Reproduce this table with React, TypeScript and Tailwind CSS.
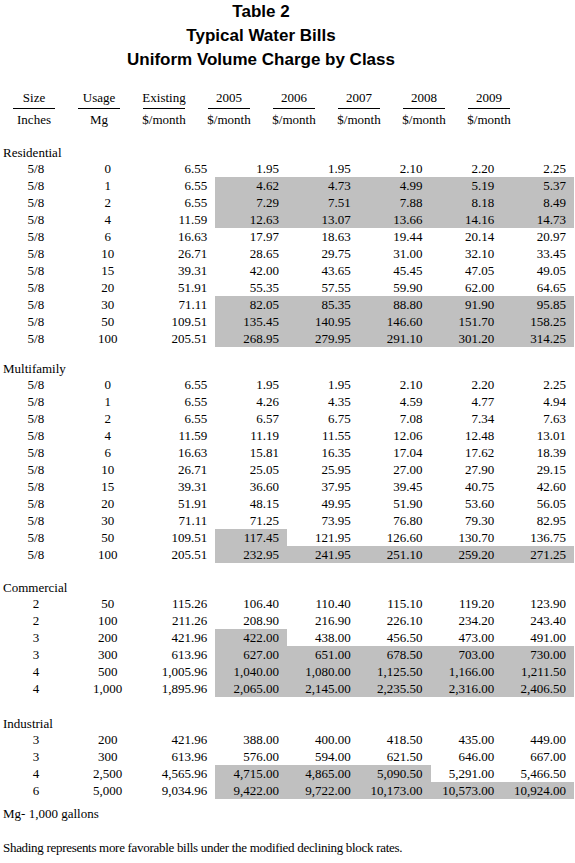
type Row = { size: string; usage: string; values: string[]; shade: number }

// shade = how many of the 2005..2009 cells are shaded, counted from 2005
const sections: { label: string; gap: string; rows: Row[] }[] = [
  {
    label: "Residential",
    gap: "mt-[17px]",
    rows: [
      { size: "5/8", usage: "0", values: ["6.55", "1.95", "1.95", "2.10", "2.20", "2.25"], shade: 0 },
      { size: "5/8", usage: "1", values: ["6.55", "4.62", "4.73", "4.99", "5.19", "5.37"], shade: 5 },
      { size: "5/8", usage: "2", values: ["6.55", "7.29", "7.51", "7.88", "8.18", "8.49"], shade: 5 },
      { size: "5/8", usage: "4", values: ["11.59", "12.63", "13.07", "13.66", "14.16", "14.73"], shade: 5 },
      { size: "5/8", usage: "6", values: ["16.63", "17.97", "18.63", "19.44", "20.14", "20.97"], shade: 0 },
      { size: "5/8", usage: "10", values: ["26.71", "28.65", "29.75", "31.00", "32.10", "33.45"], shade: 0 },
      { size: "5/8", usage: "15", values: ["39.31", "42.00", "43.65", "45.45", "47.05", "49.05"], shade: 0 },
      { size: "5/8", usage: "20", values: ["51.91", "55.35", "57.55", "59.90", "62.00", "64.65"], shade: 0 },
      { size: "5/8", usage: "30", values: ["71.11", "82.05", "85.35", "88.80", "91.90", "95.85"], shade: 5 },
      { size: "5/8", usage: "50", values: ["109.51", "135.45", "140.95", "146.60", "151.70", "158.25"], shade: 5 },
      { size: "5/8", usage: "100", values: ["205.51", "268.95", "279.95", "291.10", "301.20", "314.25"], shade: 5 },
    ],
  },
  {
    label: "Multifamily",
    gap: "mt-[14px]",
    rows: [
      { size: "5/8", usage: "0", values: ["6.55", "1.95", "1.95", "2.10", "2.20", "2.25"], shade: 0 },
      { size: "5/8", usage: "1", values: ["6.55", "4.26", "4.35", "4.59", "4.77", "4.94"], shade: 0 },
      { size: "5/8", usage: "2", values: ["6.55", "6.57", "6.75", "7.08", "7.34", "7.63"], shade: 0 },
      { size: "5/8", usage: "4", values: ["11.59", "11.19", "11.55", "12.06", "12.48", "13.01"], shade: 0 },
      { size: "5/8", usage: "6", values: ["16.63", "15.81", "16.35", "17.04", "17.62", "18.39"], shade: 0 },
      { size: "5/8", usage: "10", values: ["26.71", "25.05", "25.95", "27.00", "27.90", "29.15"], shade: 0 },
      { size: "5/8", usage: "15", values: ["39.31", "36.60", "37.95", "39.45", "40.75", "42.60"], shade: 0 },
      { size: "5/8", usage: "20", values: ["51.91", "48.15", "49.95", "51.90", "53.60", "56.05"], shade: 0 },
      { size: "5/8", usage: "30", values: ["71.11", "71.25", "73.95", "76.80", "79.30", "82.95"], shade: 0 },
      { size: "5/8", usage: "50", values: ["109.51", "117.45", "121.95", "126.60", "130.70", "136.75"], shade: 1 },
      { size: "5/8", usage: "100", values: ["205.51", "232.95", "241.95", "251.10", "259.20", "271.25"], shade: 5 },
    ],
  },
  {
    label: "Commercial",
    gap: "mt-[17px]",
    rows: [
      { size: "2", usage: "50", values: ["115.26", "106.40", "110.40", "115.10", "119.20", "123.90"], shade: 0 },
      { size: "2", usage: "100", values: ["211.26", "208.90", "216.90", "226.10", "234.20", "243.40"], shade: 0 },
      { size: "3", usage: "200", values: ["421.96", "422.00", "438.00", "456.50", "473.00", "491.00"], shade: 1 },
      { size: "3", usage: "300", values: ["613.96", "627.00", "651.00", "678.50", "703.00", "730.00"], shade: 5 },
      { size: "4", usage: "500", values: ["1,005.96", "1,040.00", "1,080.00", "1,125.50", "1,166.00", "1,211.50"], shade: 5 },
      { size: "4", usage: "1,000", values: ["1,895.96", "2,065.00", "2,145.00", "2,235.50", "2,316.00", "2,406.50"], shade: 5 },
    ],
  },
  {
    label: "Industrial",
    gap: "mt-[19px]",
    rows: [
      { size: "3", usage: "200", values: ["421.96", "388.00", "400.00", "418.50", "435.00", "449.00"], shade: 0 },
      { size: "3", usage: "300", values: ["613.96", "576.00", "594.00", "621.50", "646.00", "667.00"], shade: 0 },
      { size: "4", usage: "2,500", values: ["4,565.96", "4,715.00", "4,865.00", "5,090.50", "5,291.00", "5,466.50"], shade: 3 },
      { size: "6", usage: "5,000", values: ["9,034.96", "9,422.00", "9,722.00", "10,173.00", "10,573.00", "10,924.00"], shade: 5 },
    ],
  },
]

const headers = [
  ["Size", "Inches"],
  ["Usage", "Mg"],
  ["Existing", "$/month"],
  ["2005", "$/month"],
  ["2006", "$/month"],
  ["2007", "$/month"],
  ["2008", "$/month"],
  ["2009", "$/month"],
]

function DataRow({ row }: { row: Row }) {
  return (
    <div className="grid h-[17px] w-[574px] grid-cols-8 leading-[17px]">
      <div className="text-center">{row.size}</div>
      <div className="text-center">{row.usage}</div>
      {row.values.map((v, i) => (
        <div key={i} className={`pr-2 text-right ${i > 0 && i <= row.shade ? "bg-[#c0c0c0]" : ""}`}>
          {v}
        </div>
      ))}
    </div>
  )
}

export default function App() {
  return (
    <div className="h-[863px] w-[575px] bg-white text-[13px] text-black [font-family:'Liberation_Serif','Times_New_Roman',serif]">
      <div className="w-[522px] text-center text-[17px] font-bold leading-[24px] [font-family:'Liberation_Sans',Arial,sans-serif]">
        <div>Table 2</div>
        <div>Typical Water Bills</div>
        <div>Uniform Volume Charge by Class</div>
      </div>

      <div className="mt-[16.5px] grid grid-cols-[repeat(8,65px)] pl-[1.5px]">
        {headers.map(([top, bottom]) => (
          <div key={top} className="flex flex-col items-center">
            <span className="h-[17px] leading-[17px]">{top}</span>
            <div className="mt-[2px] h-px w-[42px] bg-black" />
            <span className="mt-[2px] h-[17px] leading-[17px]">{bottom}</span>
          </div>
        ))}
      </div>

      {sections.map((s) => (
        <div key={s.label} className={s.gap}>
          <div className="h-[15px] pl-[3px] leading-[15px]">{s.label}</div>
          {s.rows.map((r, i) => (
            <DataRow key={i} row={r} />
          ))}
        </div>
      ))}

      <div className="mt-[6px] h-[17px] pl-[3px] leading-[17px]">Mg- 1,000 gallons</div>
      <div className="mt-[17px] h-[17px] pl-[3px] leading-[17px] tracking-[-0.3px]">
        Shading represents more favorable bills under the modified declining block rates.
      </div>
    </div>
  )
}
